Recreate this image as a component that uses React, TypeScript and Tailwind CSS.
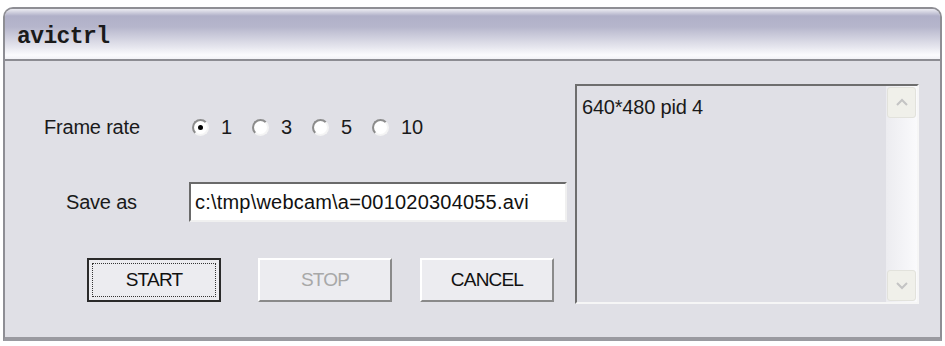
import type { FunctionComponent } from "react";

const RATES = ["1", "3", "5", "10"];

function Radio({ checked }: { checked?: boolean }) {
  return (
    <span className="flex size-[17px] items-center justify-center rounded-full border-2 border-t-[#8c8c8c] border-l-[#8c8c8c] border-r-[#f4f4f4] border-b-[#f4f4f4] bg-white">
      {checked && <span className="size-[5px] rounded-full bg-black" />}
    </span>
  );
}

function Button({
  label,
  focused,
  disabled,
}: {
  label: string;
  focused?: boolean;
  disabled?: boolean;
}) {
  return (
    <div
      className={
        focused
          ? "flex h-[44px] w-[134px] shrink-0 items-center justify-center border-2 border-[#2a2a2a] bg-[#ececf0] p-[3px]"
          : "flex h-[44px] w-[134px] shrink-0 items-center justify-center border-2 border-t-white border-l-white border-r-[#8a8a8a] border-b-[#8a8a8a] bg-[#ececf0]"
      }
    >
      <div
        className={
          focused
            ? "flex h-full w-full items-center justify-center border border-dotted border-[#333]"
            : "flex h-full w-full items-center justify-center"
        }
      >
        <span
          className={
            disabled
              ? "text-[19px] tracking-[-0.8px] text-[#a8a8a8]"
              : "text-[19px] tracking-[-0.8px] text-[#111]"
          }
        >
          {label}
        </span>
      </div>
    </div>
  );
}

function ScrollArrow({ down }: { down?: boolean }) {
  return (
    <div className="flex h-[31px] w-[29px] items-center justify-center rounded-[3px] border border-[#e2e2dc] bg-[#f0f0ea]">
      <svg width="14" height="9" viewBox="0 0 14 9">
        <path
          d={down ? "M2 2 L7 7 L12 2" : "M2 7 L7 2 L12 7"}
          fill="none"
          stroke="#c4c4c4"
          strokeWidth="2"
        />
      </svg>
    </div>
  );
}

const App: FunctionComponent = () => {
  return (
    <div
      className="h-[346px] w-[945px] overflow-hidden bg-white pt-[7px] pl-[3px]"
      style={{ fontFamily: '"Liberation Sans", Arial, sans-serif' }}
    >
      <div className="flex h-[334px] w-[939px] flex-col rounded-t-[10px] border-2 border-[#8e8e94] border-b-[4px] border-b-[#9a9aa0] bg-[#e0e0e6]">
        {/* title bar */}
        <div className="flex h-[50px] shrink-0 items-center rounded-t-[8px] bg-[linear-gradient(to_bottom,#ececf2_0px,#b0b0c8_7px,#b6b6cc_18px,#e6e6ee_38px,#fbfbfd_46px,#f2f2f6_50px)] pt-[6px] pl-[12px]">
          <span
            className="text-[23px] font-bold tracking-[-0.6px] text-[#1a1a1a]"
            style={{ fontFamily: '"Liberation Mono", "Courier New", monospace' }}
          >
            avictrl
          </span>
        </div>
        <div className="h-[2px] shrink-0 bg-[#8c8c92]" />

        {/* body */}
        <div className="flex flex-1">
          <div className="flex w-[570px] flex-col">
            <div className="mt-[54px] flex h-[24px] shrink-0 items-center">
              <span className="ml-[39px] w-[148px] text-[20px] tracking-[-0.2px] text-[#1a1a1a]">
                Frame rate
              </span>
              <div className="flex items-center">
                {RATES.map((r, i) => (
                  <div key={r} className="flex w-[60px] items-center gap-[12px]">
                    <Radio checked={i === 0} />
                    <span className="text-[20px] text-[#1a1a1a]">{r}</span>
                  </div>
                ))}
              </div>
            </div>

            <div className="mt-[43px] flex h-[40px] shrink-0 items-center">
              <span className="ml-[61px] w-[123px] text-[20px] tracking-[-0.2px] text-[#1a1a1a]">
                Save as
              </span>
              <div className="flex h-[40px] w-[378px] items-center border-2 border-t-[#6a6a6a] border-l-[#6a6a6a] border-r-[#f0f0f0] border-b-[#f0f0f0] bg-white pl-[4px]">
                <span className="text-[20px] tracking-[0.2px] whitespace-nowrap text-[#111]">
                  c:\tmp\webcam\a=001020304055.avi
                </span>
              </div>
            </div>

            <div className="mt-[36px] ml-[82px] flex shrink-0">
              <Button label="START" focused />
              <div className="ml-[37px]">
                <Button label="STOP" disabled />
              </div>
              <div className="ml-[28px]">
                <Button label="CANCEL" />
              </div>
            </div>
          </div>

          {/* list box */}
          <div className="mt-[23px] flex h-[220px] w-[344px] border-2 border-t-[#6e6e6e] border-l-[#6e6e6e] border-r-[#f6f6f6] border-b-[#f6f6f6] bg-[#e0e0e6]">
            <div className="flex-1 pt-[6px] pl-[5px]">
              <span className="text-[20px] tracking-[-0.2px] text-[#1a1a1a]">
                640*480 pid 4
              </span>
            </div>
            <div className="flex w-[31px] flex-col justify-between bg-[linear-gradient(to_right,#ececf0,#fafafc)] p-px">
              <ScrollArrow />
              <ScrollArrow down />
            </div>
          </div>
        </div>
      </div>
    </div>
  );
};

export default App;
